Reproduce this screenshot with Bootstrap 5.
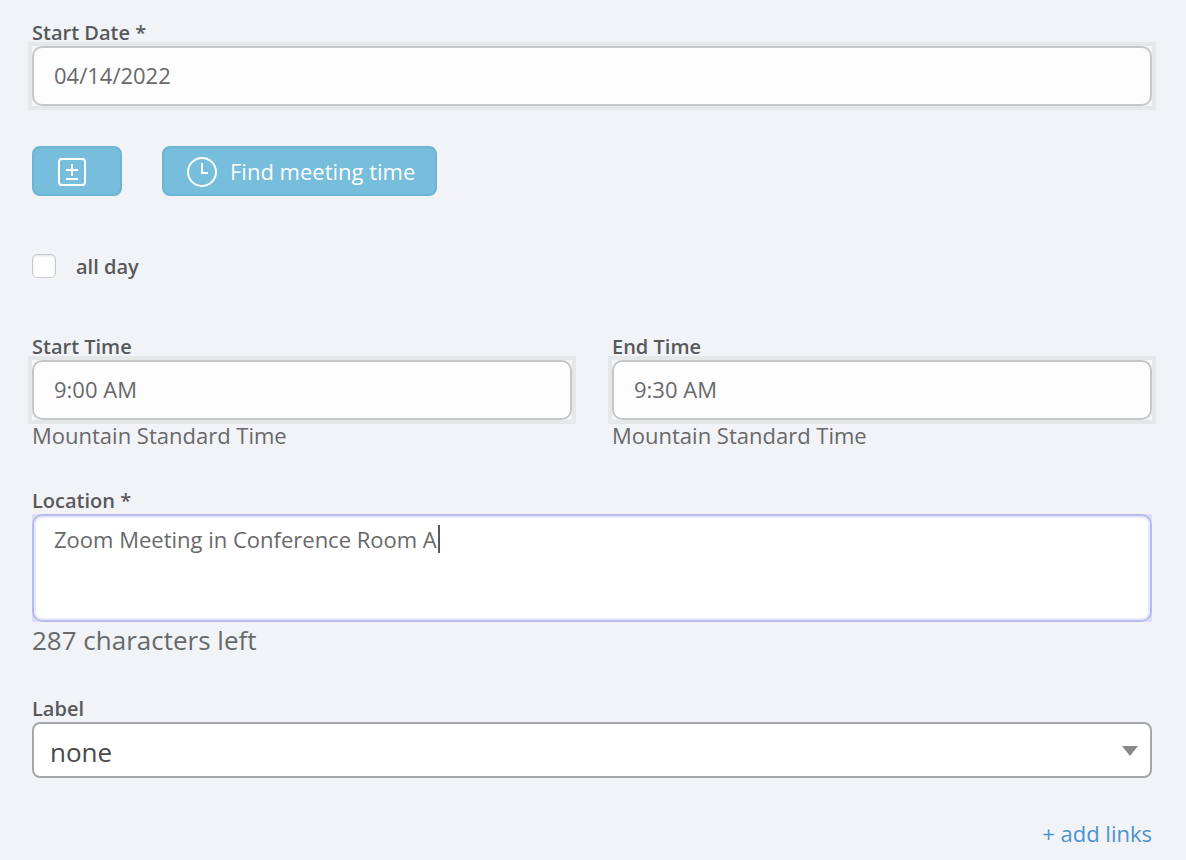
<!DOCTYPE html>
<html lang="en">
<head>
<meta charset="utf-8">
<meta name="viewport" content="width=device-width, initial-scale=1">
<title>Event details</title>
<link href="https://cdn.jsdelivr.net/npm/bootstrap@5.3.0/dist/css/bootstrap.min.css" rel="stylesheet">
<style>
body{background:#f1f3f7;color:#68696b;font-family:"Open Sans",sans-serif;font-size:22px;line-height:30px}
.event-form{padding:18px 34px 8px 32px}
.event-form .row{--bs-gutter-x:40px;margin-bottom:36px}
.field-label{display:block;margin:0;padding-top:2px;font-size:20px;line-height:26px;font-weight:600;color:#58595b}
.field-frame{outline:4px solid #e6e7e9;background:#f6f7f9}
.event-form .form-control,.event-form .form-select{border:2px solid #c6c7c9;border-radius:10px;color:#68696b;font-size:22px;line-height:30px;padding:10px 20px 12px;height:60px;background-color:#fdfdfe;box-shadow:none}
.event-form .form-select{height:56px;margin-bottom:40px;border-color:#a6a7a9;border-radius:8px;color:#48494b;background-color:#fff;font-size:26px;line-height:36px;padding:8px 48px 4px 16px;background-size:16px 12px;background-position:right 12px center;background-image:url("data:image/svg+xml,%3csvg xmlns='http://www.w3.org/2000/svg' viewBox='0 0 16 12'%3e%3cpath fill='%23888' d='M0 2h16L8 12z'/%3e%3c/svg%3e")}
.location-frame{background:#dfe2f7}
.event-form textarea.form-control{display:block;height:108px;resize:none;border-color:#b6bdec;box-shadow:inset 0 0 0 2px #e6e9fb;background-color:#fff;padding:8px 20px}
.text-caret{position:absolute;left:406px;top:11px;width:2px;height:28px;background:#58595b}
.buttons-row{gap:40px;margin:40px 0 56px}
.btn-sky{--bs-btn-color:#fff;--bs-btn-bg:#77bddc;--bs-btn-border-color:#6cb5d4;--bs-btn-hover-color:#fff;--bs-btn-hover-bg:#67b2d4;--bs-btn-hover-border-color:#5ba8ca;--bs-btn-border-width:2px;--bs-btn-border-radius:8px;height:50px;padding:0 20px 0 22px;gap:12px;font-size:22px;line-height:30px}
.btn-add{width:90px}
.all-day{gap:20px;margin-bottom:52px}
.event-form .form-check-input{width:24px;height:24px;margin:0;border:1px solid #c9cacc;border-radius:5px;background-color:#fff;box-shadow:inset 0 1px 3px #dedfe2}
.count-left{font-size:26px;line-height:36px;margin-bottom:36px}
.add-link{color:#4b92d2}
</style>
</head>
<body>
<form class="event-form">
  <div>
    <label class="field-label" for="startDate">Start Date *</label>
    <div class="field-frame"><input class="form-control" id="startDate" type="text" value="04/14/2022"></div>
  </div>

  <div class="d-flex buttons-row">
    <button type="button" class="btn btn-sky btn-add d-flex align-items-center" aria-label="Add or remove days">
      <svg width="32" height="32" viewBox="0 0 32 32" fill="none" stroke="#fff" stroke-width="2" aria-hidden="true"><rect x="3" y="4" width="26" height="26" rx="3"/><path d="M16 9v12M10 15h12M10 24h12"/></svg>
    </button>
    <button type="button" class="btn btn-sky d-flex align-items-center">
      <svg width="32" height="32" viewBox="0 0 32 32" fill="none" stroke="#fff" stroke-width="2" aria-hidden="true"><circle cx="16" cy="17" r="14"/><path d="M16 8v10h6"/></svg>
      <span>Find meeting time</span>
    </button>
  </div>

  <div class="d-flex align-items-center all-day">
    <input class="form-check-input" type="checkbox" id="allDay">
    <label class="field-label" for="allDay">all day</label>
  </div>

  <div class="row">
    <div class="col-6">
      <label class="field-label" for="startTime">Start Time</label>
      <div class="field-frame"><input class="form-control" id="startTime" type="text" value="9:00 AM"></div>
      <div>Mountain Standard Time</div>
    </div>
    <div class="col-6">
      <label class="field-label" for="endTime">End Time</label>
      <div class="field-frame"><input class="form-control" id="endTime" type="text" value="9:30 AM"></div>
      <div>Mountain Standard Time</div>
    </div>
  </div>

  <div>
    <label class="field-label" for="location">Location *</label>
    <div class="location-frame position-relative">
      <textarea class="form-control" id="location">Zoom Meeting in Conference Room A</textarea>
      <span class="text-caret" aria-hidden="true"></span>
    </div>
    <div class="count-left">287 characters left</div>
  </div>

  <div>
    <label class="field-label" for="label">Label</label>
    <select class="form-select" id="label"><option>none</option></select>
  </div>

  <div class="text-end"><a class="add-link text-decoration-none" href="#">+ add links</a></div>
</form>
<script src="https://cdn.jsdelivr.net/npm/bootstrap@5.3.0/dist/js/bootstrap.bundle.min.js"></script>
</body>
</html>
